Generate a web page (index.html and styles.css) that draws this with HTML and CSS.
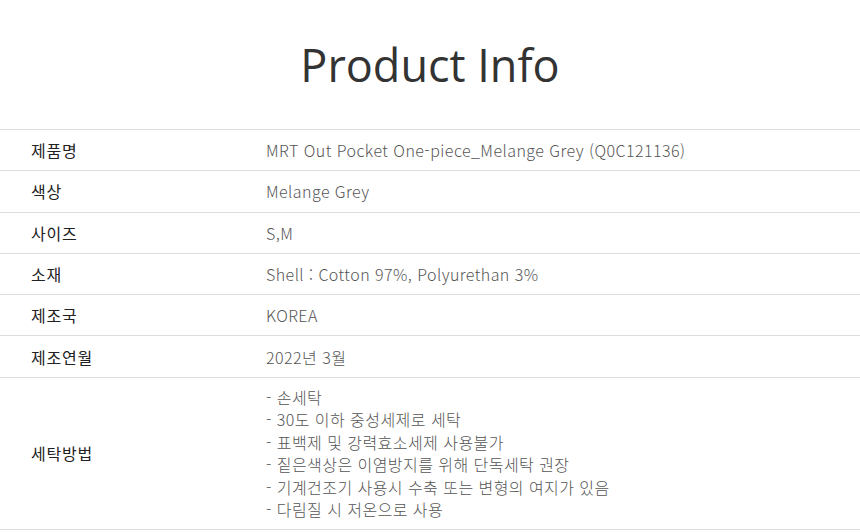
FILE: index.html
```html
<!DOCTYPE html>
<html lang="ko">
<head>
    <meta charset="UTF-8">
    <meta name="viewport" content="width=device-width, initial-scale=1.0">
    <title>Product Info</title>
    <link rel="stylesheet" href="styles.css">
</head>
<body>
    <div class="product-info">
        <h2 class="title">Product Info</h2>
        <table class="info-table">
            <tr>
                <th>제품명</th>
                <td>MRT Out Pocket One-piece_Melange Grey (Q0C121136)</td>
            </tr>
            <tr>
                <th>색상</th>
                <td>Melange Grey</td>
            </tr>
            <tr>
                <th>사이즈</th>
                <td>S,M</td>
            </tr>
            <tr>
                <th>소재</th>
                <td>Shell : Cotton 97%, Polyurethan 3%</td>
            </tr>
            <tr>
                <th>제조국</th>
                <td>KOREA</td>
            </tr>
            <tr>
                <th>제조연월</th>
                <td>2022년 3월</td>
            </tr>
            <tr class="wash">
                <th>세탁방법</th>
                <td>
                    - 손세탁<br>
                    - 30도 이하 중성세제로 세탁<br>
                    - 표백제 및 강력효소세제 사용불가<br>
                    - 짙은색상은 이염방지를 위해 단독세탁 권장<br>
                    - 기계건조기 사용시 수축 또는 변형의 여지가 있음<br>
                    - 다림질 시 저온으로 사용
                </td>
            </tr>
        </table>
    </div>
</body>
</html>
```

FILE: styles.css
```css
* {
    margin: 0;
    padding: 0;
    box-sizing: border-box;
}

body {
    background: #fff;
    font-family: "Noto Sans CJK KR", "Noto Sans", sans-serif;
    color: #333;
}

.title {
    font-family: "Open Sans", "Noto Sans", sans-serif;
    font-size: 45px;
    font-weight: 500;
    color: #333;
    text-align: center;
    line-height: 1;
    padding: 42px 0 42px;
}

.info-table {
    width: 100%;
    border-collapse: collapse;
    border-top: 1px solid #ddd;
}

.info-table tr {
    border-bottom: 1px solid #ddd;
}

.info-table th,
.info-table td {
    height: 41.3px;
    font-size: 16px;
    line-height: 22px;
    text-align: left;
    vertical-align: middle;
}

.info-table th {
    width: 266px;
    padding-left: 31px;
    font-weight: 400;
    letter-spacing: 0.8px;
    color: #222;
}

.info-table td {
    font-weight: 300;
    letter-spacing: 0.45px;
    color: #555;
}

.info-table .wash td {
    height: 152px;
    line-height: 22.6px;
    padding: 6px 0;
}
```
